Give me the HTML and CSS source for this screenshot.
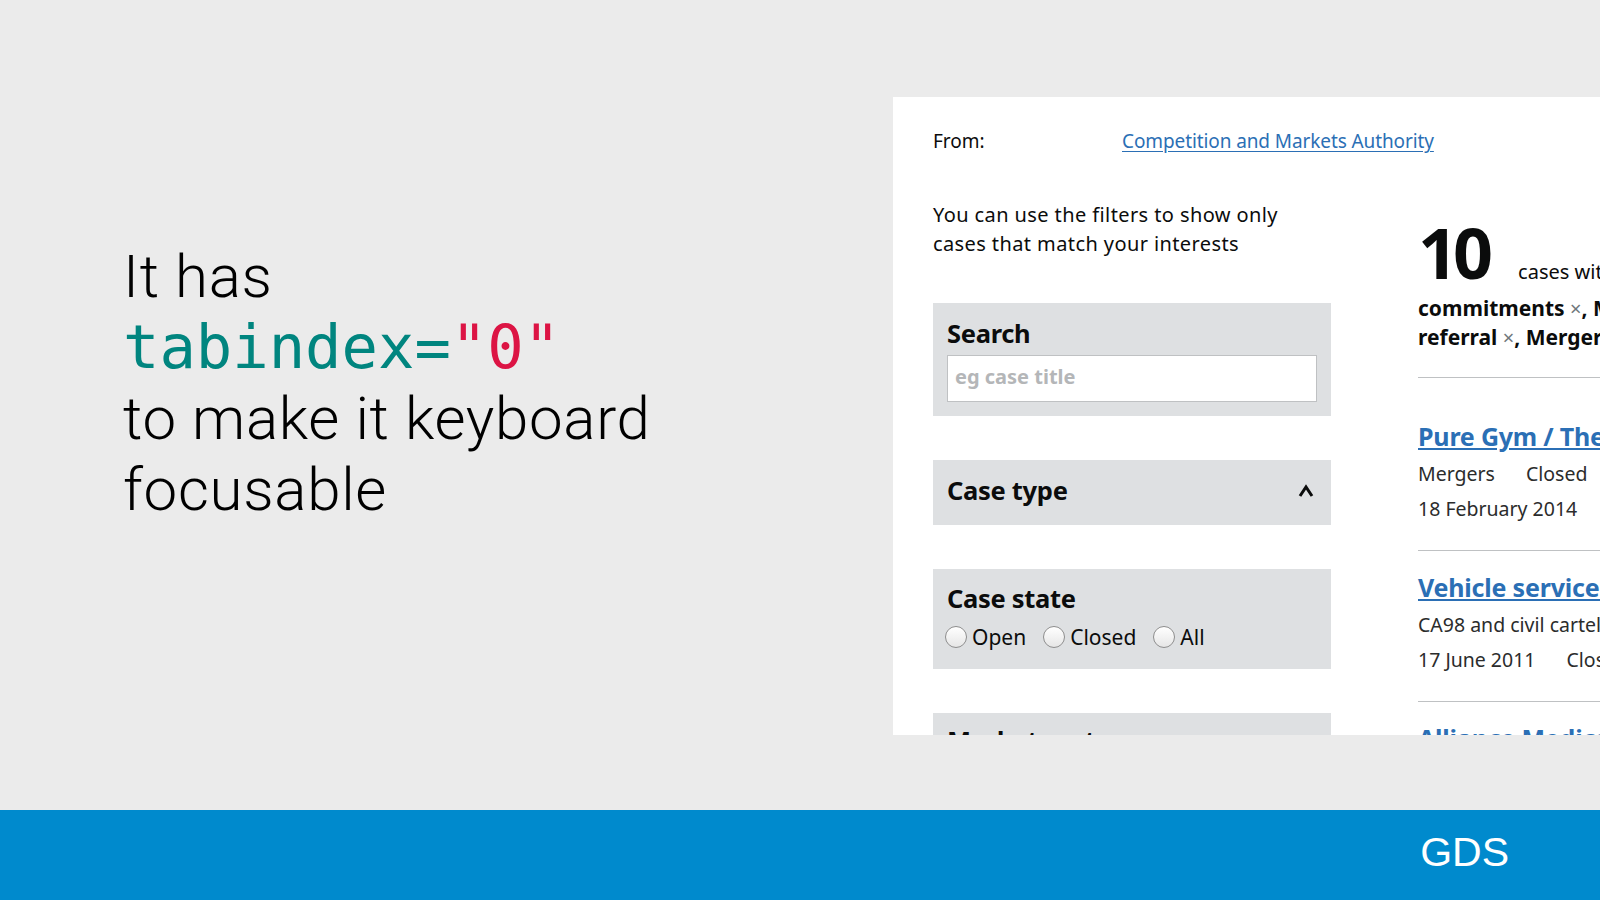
FILE: index.html
```html
<!DOCTYPE html>
<html lang="en">
<head>
<meta charset="utf-8">
<title>It has tabindex="0"</title>
<link rel="stylesheet" href="styles.css">
</head>
<body>
<main class="slide">
  <section class="caption">
    <p class="caption-text">It has<br><code class="code"><span class="code-attr">tabindex=</span><span class="code-val">"0"</span></code><br>to make it keyboard<br>focusable</p>
  </section>
  <section class="shot">
    <div class="from-row">
      <span class="from-label">From:</span>
      <a class="link" href="#">Competition and Markets Authority</a>
    </div>
    <div class="finder">
      <div class="filters">
        <p class="intro">You can use the filters to show only cases that match your interests</p>
        <div class="filter filter-search">
          <label class="filter-title" for="q">Search</label>
          <input class="search-input" id="q" type="text" placeholder="eg case title">
        </div>
        <div class="filter filter-toggle">
          <span class="filter-title">Case type</span>
          <svg class="caret" width="16" height="14" viewBox="0 0 16 14"><polyline points="2,12 8,3 14,12" fill="none" stroke="#0b0c0c" stroke-width="3"/></svg>
        </div>
        <div class="filter filter-state">
          <span class="filter-title">Case state</span>
          <div class="radios">
            <label class="radio"><input type="radio" name="s"><span>Open</span></label>
            <label class="radio"><input type="radio" name="s"><span>Closed</span></label>
            <label class="radio"><input type="radio" name="s"><span>All</span></label>
          </div>
        </div>
        <div class="filter filter-market">
          <span class="filter-title">Market sector</span>
        </div>
      </div>
      <div class="results">
        <div class="summary">
          <div class="summary-top"><span class="count">10</span><span class="count-text">cases with case type</span></div>
          <span class="tag-line tag-first">commitments <span class="x">×</span>, Markets <span class="x">×</span>,</span>
          <span class="tag-line">referral <span class="x">×</span>, Mergers <span class="x">×</span></span>
        </div>
        <ul class="case-list">
          <li class="case">
            <a class="case-title" href="#">Pure Gym / The Gym Group merger inquiry</a>
            <div class="case-meta"><span>Mergers</span><span>Closed</span></div>
            <div class="case-meta"><span>18 February 2014</span></div>
          </li>
          <li class="case">
            <a class="case-title" href="#">Vehicle services: civil investigation</a>
            <div class="case-meta"><span>CA98 and civil cartels</span></div>
            <div class="case-meta"><span>17 June 2011</span><span>Closed</span></div>
          </li>
          <li class="case">
            <a class="case-title" href="#">Alliance Medical / IBA Molecular</a>
            <div class="case-meta"><span>Mergers</span><span>Closed</span></div>
          </li>
        </ul>
      </div>
    </div>
  </section>
</main>
<footer class="bar"><span class="logo">GDS</span></footer>
</body>
</html>
```
FILE: styles.css
```css
html, body {
  margin: 0;
  padding: 0;
}
body {
  width: 1600px;
  height: 900px;
  background: #ebebeb;
  overflow: hidden;
  font-family: "Noto Sans", sans-serif;
  color: #0b0c0c;
}
.slide {
  display: flex;
  height: 810px;
}
.caption {
  flex: none;
  width: 893px;
  box-sizing: border-box;
  padding: 241px 0 0 123px;
}
.caption-text {
  margin: 0;
  font-family: Roboto, "Liberation Sans", sans-serif;
  font-weight: 300;
  font-size: 60px;
  line-height: 71px;
  letter-spacing: 0.7px;
  color: #000;
}
.code {
  font-family: "DejaVu Sans Mono", monospace;
  font-size: 60.5px;
  letter-spacing: 0;
}
.code-attr { color: #00857f; }
.code-val { color: #dc1444; }

.shot {
  flex: 1;
  margin-top: 97px;
  height: 638px;
  background: #fff;
  overflow: hidden;
  box-sizing: border-box;
  padding: 32px 0 0 40px;
}
.from-row {
  display: grid;
  grid-template-columns: 189px auto;
  font-size: 19px;
  line-height: 25px;
}
.from-label { color: #0b0c0c; }
.link {
  color: #2b6fb5;
  text-decoration: underline;
  text-underline-offset: 3px;
  letter-spacing: -0.1px;
}
.finder {
  display: flex;
  margin-top: 46px;
}
.filters {
  flex: none;
  width: 398px;
}
.intro {
  margin: 0;
  font-size: 20px;
  line-height: 29px;
  letter-spacing: 0.4px;
  width: 390px;
}
.filter {
  background: #dee0e2;
  margin-top: 44px;
  padding: 15px 14px 20px;
}
.filter-search {
  margin-top: 45px;
  padding-bottom: 14px;
}
.filter-title {
  display: block;
  font-weight: 700;
  font-size: 25.5px;
  line-height: 30px;
  letter-spacing: -0.3px;
}
.search-input {
  display: block;
  box-sizing: border-box;
  width: 100%;
  height: 47px;
  margin-top: 7px;
  border: 1px solid #bfc1c3;
  padding: 0 7px 4px;
  font-family: "Noto Sans", sans-serif;
  font-size: 20px;
  font-weight: 700;
  background: #fff;
}
.search-input::placeholder {
  color: #b4b6b8;
}
.filter-toggle {
  display: flex;
  justify-content: space-between;
  align-items: center;
}
.caret {
  margin-right: 3px;
  margin-top: 2px;
}
.filter-state {
  padding-top: 14px;
}
.radios {
  display: flex;
  margin: 12px 0 0 -2px;
  height: 24px;
  align-items: center;
}
.radio {
  display: inline-flex;
  align-items: center;
  gap: 5px;
  margin-right: 17px;
  font-size: 21px;
  line-height: 24px;
}
.radio input {
  appearance: none;
  -webkit-appearance: none;
  margin: 0;
  width: 22px;
  height: 22px;
  border-radius: 50%;
  border: 1px solid #8e8e8e;
  background: linear-gradient(#ffffff, #e6e6e6);
  box-sizing: border-box;
}
.filter-market {
  padding-top: 12px;
}

.results {
  flex: none;
  width: 460px;
  margin-left: 87px;
}
.summary {
  padding-bottom: 25px;
  border-bottom: 1px solid #bfc1c3;
}
.summary-top {
  display: flex;
  align-items: baseline;
  margin-top: 12px;
  height: 80px;
  line-height: 80px;
  white-space: nowrap;
}
.count {
  font-weight: 700;
  font-size: 70px;
  line-height: 80px;
  letter-spacing: -5px;
}
.count-text {
  margin-left: 30px;
  font-size: 20px;
}
.tag-line {
  display: block;
  font-weight: 700;
  font-size: 21px;
  line-height: 29px;
  white-space: nowrap;
}
.tag-first {
  margin-top: 2px;
}
.x {
  font-weight: 400;
  font-size: 20px;
  color: #6f777b;
}
.case-list {
  list-style: none;
  margin: 22px 0 0;
  padding: 0;
}
.case {
  padding: 21px 0 24px;
  border-bottom: 1px solid #bfc1c3;
}
.case-title {
  display: block;
  font-weight: 700;
  font-size: 25px;
  line-height: 30px;
  color: #2b6fb5;
  text-decoration: underline;
  text-underline-offset: 2px;
  white-space: nowrap;
  letter-spacing: -0.2px;
}
.case-meta {
  font-size: 19.5px;
  line-height: 35px;
  color: #2b2c2c;
  white-space: nowrap;
}
.case-title + .case-meta {
  margin-top: 5px;
}
.case-meta span {
  margin-right: 31px;
}

.bar {
  height: 90px;
  background: #008acd;
  display: flex;
  justify-content: flex-end;
  box-sizing: border-box;
  padding: 22px 91px 0 0;
}
.logo {
  font-family: "Liberation Sans", Arial, sans-serif;
  font-size: 41px;
  line-height: 40px;
  color: #fff;
}
```
